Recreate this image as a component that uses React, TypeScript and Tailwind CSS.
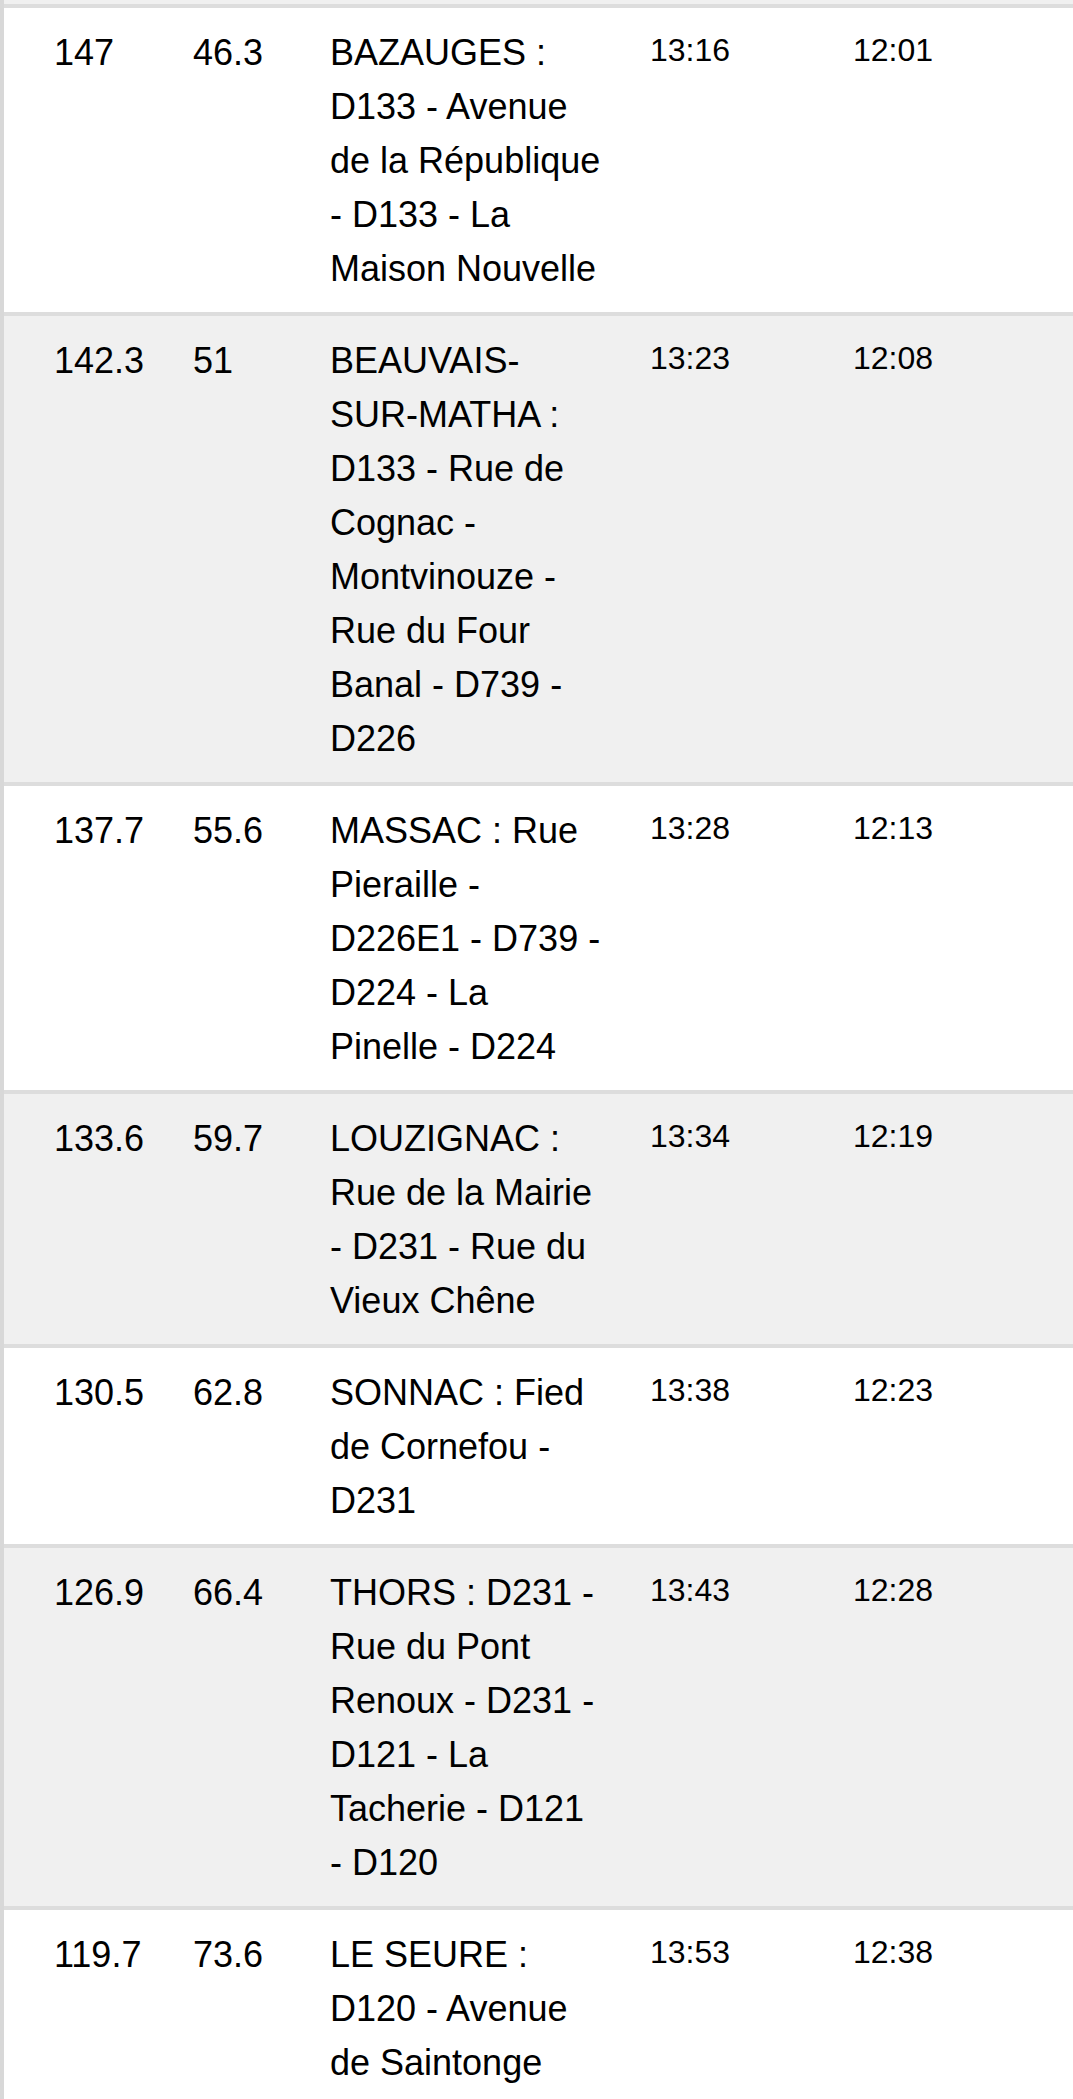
interface Stage {
  km: string;
  kmDone: string;
  place: string[];
  late: string;
  early: string;
}

// lines of the place column are kept as they wrap on the original page
const stages: Stage[] = [
  {
    km: "147",
    kmDone: "46.3",
    place: ["BAZAUGES :", "D133 - Avenue", "de la République", "- D133 - La", "Maison Nouvelle"],
    late: "13:16",
    early: "12:01",
  },
  {
    km: "142.3",
    kmDone: "51",
    place: ["BEAUVAIS-", "SUR-MATHA :", "D133 - Rue de", "Cognac -", "Montvinouze -", "Rue du Four", "Banal - D739 -", "D226"],
    late: "13:23",
    early: "12:08",
  },
  {
    km: "137.7",
    kmDone: "55.6",
    place: ["MASSAC : Rue", "Pieraille -", "D226E1 - D739 -", "D224 - La", "Pinelle - D224"],
    late: "13:28",
    early: "12:13",
  },
  {
    km: "133.6",
    kmDone: "59.7",
    place: ["LOUZIGNAC :", "Rue de la Mairie", "- D231 - Rue du", "Vieux Chêne"],
    late: "13:34",
    early: "12:19",
  },
  {
    km: "130.5",
    kmDone: "62.8",
    place: ["SONNAC : Fied", "de Cornefou -", "D231"],
    late: "13:38",
    early: "12:23",
  },
  {
    km: "126.9",
    kmDone: "66.4",
    place: ["THORS : D231 -", "Rue du Pont", "Renoux - D231 -", "D121 - La", "Tacherie - D121", "- D120"],
    late: "13:43",
    early: "12:28",
  },
  {
    km: "119.7",
    kmDone: "73.6",
    place: ["LE SEURE :", "D120 - Avenue", "de Saintonge"],
    late: "13:53",
    early: "12:38",
  },
];

export default function App() {
  return (
    <div
      className="min-h-screen bg-white border-l-4 border-[#d8d8d8] text-black"
      style={{ fontFamily: '"Liberation Sans", Arial, Helvetica, sans-serif' }}
    >
      {/* tail of the previous row */}
      <div className="h-[4px] bg-[#f0f0f0]" />

      {stages.map((s, i) => (
        <div
          key={s.km}
          className={`grid grid-cols-[139px_137px_320px_203px_1fr] border-t-4 border-[#dddddd] pl-[50px] pt-[17.5px] pb-[16.5px] ${
            i % 2 === 1 ? "bg-[#f0f0f0]" : "bg-white"
          }`}
        >
          <div className="text-[36px] leading-[54px]">{s.km}</div>
          <div className="text-[36px] leading-[54px]">{s.kmDone}</div>
          <div className="text-[36px] leading-[54px] whitespace-nowrap">
            {s.place.map((line) => (
              <div key={line}>{line}</div>
            ))}
          </div>
          <div className="text-[32px] leading-[48px]">{s.late}</div>
          <div className="text-[32px] leading-[48px]">{s.early}</div>
        </div>
      ))}
    </div>
  );
}
